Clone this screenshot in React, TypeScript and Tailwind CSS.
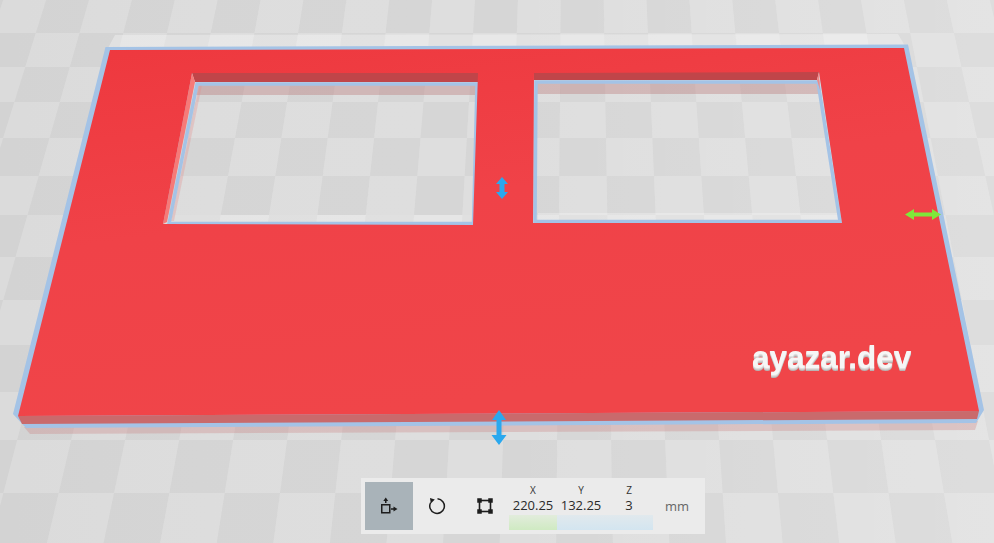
import React from 'react';

// horizontal floor lines, measured from the picture (perspective spacing)
const floorYs = [-1, 33, 67, 102, 138, 176, 215, 257, 300, 345, 392, 440, 493, 548];
const lineX = (n: number, y: number) => 575 + (n - 0.33) * 0.02523 * (y + 1700);

function FloorCells() {
  const cells: React.ReactNode[] = [];
  for (let r = 0; r < floorYs.length - 1; r++) {
    const y0 = floorYs[r];
    const y1 = floorYs[r + 1];
    for (let n = -14; n < 12; n++) {
      const light = Math.abs(r + n) % 2 === 1;
      const pts = `${lineX(n, y0)},${y0} ${lineX(n + 1, y0)},${y0} ${lineX(n + 1, y1)},${y1} ${lineX(n, y1)},${y1}`;
      cells.push(<polygon key={`${r}-${n}`} points={pts} fill={light ? '#dedede' : '#d6d6d6'} />);
    }
  }
  return <g className="blur-[0.6px]">{cells}</g>;
}

function Arrow({ d, fill }: { d: string; fill: string }) {
  return <path d={d} fill={fill} />;
}

function Scene() {
  return (
    <svg viewBox="0 0 994 543" className="absolute inset-0 h-[543px] w-[994px]">
      <defs>
        <linearGradient id="tint" x1="0" y1="0" x2="1" y2="0">
          <stop offset="0" stopColor="#000" stopOpacity="0.015" />
          <stop offset="0.5" stopColor="#fff" stopOpacity="0" />
          <stop offset="1" stopColor="#fff" stopOpacity="0.18" />
        </linearGradient>
        <linearGradient id="plate" x1="0" y1="0" x2="0.35" y2="1">
          <stop offset="0" stopColor="#ee383e" />
          <stop offset="0.5" stopColor="#f04248" />
          <stop offset="1" stopColor="#f04549" />
        </linearGradient>
      </defs>

      <FloorCells />
      <rect x="0" y="0" width="994" height="543" fill="url(#tint)" />

      {/* underside seen past the back edge */}
      <polygon points="115,35 898,34 905,46 108,48" fill="#fff" opacity="0.3" />

      {/* shadows on the floor inside both windows */}
      <polygon points="196,85 476,85 476,95 193,95" fill="#b86f6f" opacity="0.35" />
      <polygon points="537,83 818,83 820,94 537,94" fill="#b86f6f" opacity="0.35" />
      <polygon points="173,215 473,215 472,222 171,222" fill="#fff" opacity="0.25" />
      <polygon points="538,213 838,213 840,220 538,220" fill="#fff" opacity="0.25" />
      <polygon points="199,85 202,85 174,221 171,221" fill="#e58c8c" opacity="0.3" />

      {/* pink band under the front edge */}
      <polygon points="24,427 978,421 975,430 30,434" fill="#c97a7a" opacity="0.3" />

      {/* first layer outline, open at the two windows */}
      <path
        fillRule="evenodd"
        fill="#a4c3e6"
        d="M105.5 47 L908 44.5 L984 410 L976 423 L26 428 L13 414 Z M192 73 L163 224 L473 225 L478 73 Z M534 73 L533 223 L842 223 L819 72 Z"
      />
      <polygon points="197,84 477,84 473.5,223.5 169,223.5" fill="none" stroke="#a4c3e6" strokeWidth="3.5" />
      <polygon points="536,82 818,82 840,221.5 535,221.5" fill="none" stroke="#a4c3e6" strokeWidth="3.5" />

      {/* inner walls */}
      <polygon points="192,73 478,73 478,82 195,82" fill="#c04549" />
      <polygon points="534,72 819,72 817,80 534,80" fill="#c04549" />
      <polygon points="192,73 195,82 167,222 163,224" fill="#f67a78" />
      <polygon points="819,72 817,80 820,90" fill="#f08a88" />

      {/* front wall */}
      <polygon points="18,416 979,411 977,419 22,424" fill="#c96a6c" />

      {/* top face */}
      <path
        fillRule="evenodd"
        fill="url(#plate)"
        d="M110 50 L904 48 L979 411 L18 416 Z M192 73 L163 224 L473 225 L478 73 Z M534 73 L533 223 L842 223 L819 72 Z"
      />

      <Arrow
        fill="#2aa8ee"
        d="M502 177 L508 184 L504.5 184 L504.5 192 L508 192 L502 199 L496 192 L499.5 192 L499.5 184 L496 184 Z"
      />
      <Arrow
        fill="#2aa8ee"
        d="M499 410 L506 420 L501.5 420 L501.5 435 L506.5 435 L499 445 L491.5 435 L496.5 435 L496.5 420 L492 420 Z"
      />
      <Arrow
        fill="#7fe83a"
        d="M905 214.5 L914 209 L914 212.5 L932 212.5 L932 209 L941 214.5 L932 220 L932 216.5 L914 216.5 L914 220 Z"
      />
    </svg>
  );
}

function MoveIcon() {
  return (
    <svg width="24" height="24" viewBox="0 0 24 24" fill="none">
      <rect x="4.75" y="10.75" width="8" height="8" stroke="#1d1d1d" strokeWidth="1.5" />
      <path d="M8.75 9V6.5" stroke="#1d1d1d" strokeWidth="1.5" />
      <path d="M8.75 3.5L11.2 7H6.3Z" fill="#1d1d1d" />
      <path d="M14 15H17" stroke="#1d1d1d" strokeWidth="1.5" />
      <path d="M20.5 15L16.5 12.5V17.5Z" fill="#1d1d1d" />
    </svg>
  );
}

function RotateIcon() {
  return (
    <svg width="24" height="24" viewBox="0 0 24 24" fill="none">
      <path d="M12.5 4.8A7.3 7.3 0 1 1 5.7 8.5" stroke="#1d1d1d" strokeWidth="1.5" />
      <path d="M5 4L9.8 5.4L5.8 9.6Z" fill="#1d1d1d" />
    </svg>
  );
}

function ScaleIcon() {
  return (
    <svg width="24" height="24" viewBox="0 0 24 24" fill="none">
      <rect x="6.5" y="6.5" width="11" height="11" stroke="#1d1d1d" strokeWidth="1.6" />
      <rect x="4.25" y="4.25" width="4.5" height="4.5" fill="#1d1d1d" />
      <rect x="15.25" y="4.25" width="4.5" height="4.5" fill="#1d1d1d" />
      <rect x="4.25" y="15.25" width="4.5" height="4.5" fill="#1d1d1d" />
      <rect x="15.25" y="15.25" width="4.5" height="4.5" fill="#1d1d1d" />
    </svg>
  );
}

function SizeField({ label, value, bar }: { label: string; value: string; bar: string }) {
  return (
    <div className="flex h-12 w-12 flex-col items-center">
      <span className="mt-[2px] h-[12px] text-[10px] leading-[12px] text-[#333]">{label}</span>
      <span className="h-[19px] text-[13px] leading-[19px] whitespace-nowrap text-[#2a2a2a]">{value}</span>
      <div className={`mt-auto h-[16px] w-full bg-linear-to-t ${bar}`} />
    </div>
  );
}

export default function App() {
  return (
    <div className="relative h-[543px] w-[994px] overflow-hidden bg-[#dcdcdc] font-['Open_Sans',sans-serif]">
      <Scene />

      {/* lettering printed on the plate */}
      <span className="absolute top-[339px] left-[752px] font-['Liberation_Sans',Arial,sans-serif] text-[31.5px] leading-[36px] font-bold whitespace-nowrap text-[#f6f6f6] blur-[0.5px] [text-shadow:0_1px_0_#e2e0e0,0_2px_0_#cfcccc,0_3px_0_#b8b4b4]">
        ayazar.dev
      </span>

      <div className="absolute top-[478px] left-[361px] flex w-[344px] bg-[#ebebeb] p-1">
        <button className="flex h-12 w-12 items-center justify-center bg-[#a9b3b9]">
          <MoveIcon />
        </button>
        <button className="flex h-12 w-12 items-center justify-center">
          <RotateIcon />
        </button>
        <button className="flex h-12 w-12 items-center justify-center">
          <ScaleIcon />
        </button>
        <SizeField label="X" value="220.25" bar="from-[#cfeac2] to-[#e2ecdc]" />
        <SizeField label="Y" value="132.25" bar="from-[#d3e5f0] to-[#e1e9ed]" />
        <SizeField label="Z" value="3" bar="from-[#d3e5f0] to-[#e1e9ed]" />
        <div className="flex h-12 w-12 items-center justify-center pt-[2px] text-[13px] text-[#666]">mm</div>
      </div>
    </div>
  );
}
